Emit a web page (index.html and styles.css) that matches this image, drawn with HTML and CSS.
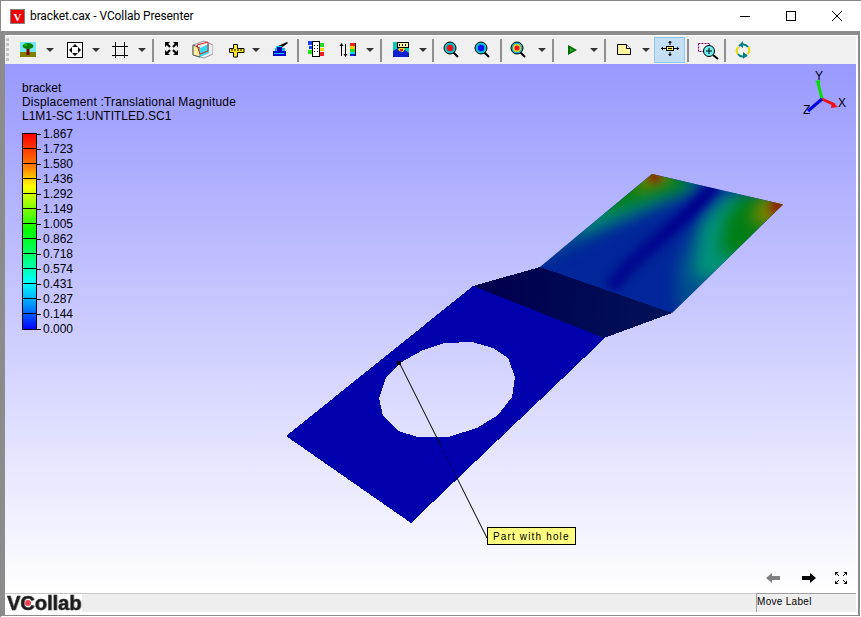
FILE: index.html
```html
<!DOCTYPE html>
<html lang="en">
<head>
<meta charset="utf-8">
<title>bracket.cax - VCollab Presenter</title>
<link rel="stylesheet" href="styles.css">
</head>
<body>
<div class="window">
  <header class="titlebar">
    <svg class="appicon" viewBox="0 0 15 15" width="15" height="15"><rect x=".5" y=".5" width="14" height="14" fill="#f00000" stroke="#808080"/><text x="7.5" y="11.5" class="appicon-v">V</text></svg>
    <span class="title">bracket.cax - VCollab Presenter</span>
    <div class="winbtns">
      <span class="winbtn"><svg viewBox="0 0 10 10" width="10" height="10"><path d="M0 5.5h10" stroke="#000" fill="none"/></svg></span>
      <span class="winbtn"><svg viewBox="0 0 10 10" width="10" height="10"><rect x=".5" y=".5" width="9" height="9" stroke="#000" fill="none"/></svg></span>
      <span class="winbtn"><svg viewBox="0 0 10 10" width="10" height="10"><path d="M0 0l10 10M10 0L0 10" stroke="#000" fill="none"/></svg></span>
    </div>
  </header>
  <div class="client">
    <div class="toolbar">
      <span class="grip"></span>
      <svg class="ico m5" viewBox="0 0 24 24"><rect x="6" y="4" width="16" height="10" fill="#6fe8f5"/><rect x="6" y="14" width="16" height="5" fill="#808000"/><rect x="12.500" y="10" width="3" height="7" fill="#800000"/><ellipse cx="14" cy="8" rx="5.500" ry="3" fill="#008000"/><rect x="10" y="6" width="3" height="2" fill="#00c000"/></svg>
      <span class="caret m6"></span>
      <svg class="ico m7" viewBox="0 0 24 24"><rect x="4.500" y="4.500" width="15" height="15" fill="#fff" stroke="#000"/><path d="M12 6l3 3H9zM12 18l3-3H9zM6 12l3-3v6zM18 12l-3-3v6z" fill="#000"/></svg>
      <span class="caret m3"></span>
      <svg class="ico m6" viewBox="0 0 24 24"><path d="M7.500 4v16M16.500 4v16M4 8.500h16M4 17.500h16" stroke="#000" fill="none"/></svg>
      <span class="caret m4"></span>
      <span class="sep m4"></span>
      <svg class="ico m5" viewBox="0 0 24 24"><path d="M8 6l3 3M17 6l-3 3M8 15l3-3M17 15l-3-3" stroke="#000" stroke-width="2" fill="none"/><path d="M6 4h5l-5 5zM19 4h-5l5 5zM6 17h5l-5-5zM19 17h-5l5-5z" fill="#000"/></svg>
      <svg class="ico m6" viewBox="0 0 24 24"><path d="M4 7l11-4 9 4v9l-9 4-11-3z" fill="#eee" stroke="#999"/><path d="M4 7l7 3v9l-7-2z" fill="#fff0a0" stroke="#555"/><path d="M11 10l9-4v9l-9 4z" fill="#30d8f0"/><path d="M8 7l11-3v9l-8 3z" fill="none" stroke="#e02020"/></svg>
      <svg class="ico m11" viewBox="0 0 24 24"><path d="M9.500 6.500h4v4h6.500v4h-6.500v4.500h-4v-4.500h-4v-4h4z" fill="#ffe820" stroke="#000"/><path d="M8 11v2M11 11v2M14 11v2M17 11v2" stroke="#000" fill="none"/></svg>
      <span class="caret m2"></span>
      <svg class="ico m7" viewBox="0 0 24 24"><path d="M9 8l9-4 1 1-8 6z" fill="#000"/><path d="M7 8h6v3H7z" fill="#10c8f0"/><path d="M6 10h10v3H6z" fill="#10b0e8"/><path d="M8 9h5v5H8z" fill="#0000a0"/><path d="M4 13h13v5H4z" fill="#0000d0"/><path d="M5 15h10v1H5z" fill="#10c8f0"/></svg>
      <span class="sep m4"></span>
      <svg class="ico m5" viewBox="0 0 24 24"><rect x="8.500" y="3.500" width="7" height="15" fill="#fff" stroke="#000"/><path d="M10 7h1v1h-1zM13 7h1v1h-1zM10 10h1v1h-1zM13 10h1v1h-1zM10 13h1v1h-1zM13 13h1v1h-1z" fill="#000"/><rect x="4" y="3" width="4" height="4" fill="#2040ff"/><rect x="5" y="8" width="3" height="3" fill="#0050ff"/><rect x="4" y="12" width="4" height="4" fill="#20e020"/><rect x="16" y="5" width="4" height="4" fill="#20e020"/><rect x="16" y="10" width="4" height="3" fill="#f0d000"/><rect x="16" y="14" width="4" height="4" fill="#f02020"/></svg>
      <svg class="ico m8" viewBox="0 0 24 24"><path d="M5.500 6v12M9.500 6v12" stroke="#000" fill="none"/><path d="M5.500 5l2 3h-4zM9.500 19l2-3h-4z" fill="#000"/><rect x="14" y="5" width="5" height="3" fill="#f02020"/><rect x="14" y="8" width="5" height="3" fill="#f0d000"/><rect x="14" y="11" width="5" height="3" fill="#20e020"/><rect x="14" y="14" width="5" height="2" fill="#10d0f0"/><rect x="14" y="16" width="5" height="2" fill="#1020d0"/><rect x="19" y="5" width="1" height="13" fill="#000"/></svg>
      <span class="caret m4"></span>
      <span class="sep m4"></span>
      <svg class="ico m7" viewBox="0 0 24 24"><rect x="4" y="4" width="16" height="15" fill="#10c8b0"/><path d="M4 13l5-3 4 3 3-1 4 3v4H4z" fill="#1020d0"/><path d="M9 11l4-2 3 2-2 3-4-1z" fill="#f0e000"/><path d="M11 11l3 0 0 2-3 0z" fill="#e02020"/><rect x="8.500" y="4.500" width="11" height="5" fill="#fff8a0" stroke="#000"/><path d="M10 6h1v2h-1zM13 6h1v2h-1zM16 6h1v2h-1z" fill="#000"/></svg>
      <span class="caret m4"></span>
      <span class="sep m3"></span>
      <svg class="ico m4" viewBox="0 0 24 24"><path d="M15 14l5 5" stroke="#000" stroke-width="2" fill="none"/><circle cx="12" cy="10" r="6" fill="#10c0d0" stroke="#000"/><circle cx="12" cy="10" r="3.200" fill="#f01010"/></svg>
      <svg class="ico m7" viewBox="0 0 24 24"><path d="M15 14l5 5" stroke="#000" stroke-width="2" fill="none"/><circle cx="12" cy="10" r="6" fill="#10c0d0" stroke="#000"/><circle cx="12" cy="10" r="3.200" fill="#0010f0"/></svg>
      <span class="sep m7"></span>
      <svg class="ico m3" viewBox="0 0 24 24"><path d="M15 14l5 5" stroke="#000" stroke-width="2" fill="none"/><circle cx="12" cy="10" r="6" fill="#10b0d0" stroke="#000"/><circle cx="12" cy="10" r="4" fill="#f0d020"/><circle cx="12" cy="10" r="2.500" fill="#f01010"/></svg>
      <span class="caret m7"></span>
      <span class="sep m4"></span>
      <svg class="ico m7" viewBox="0 0 24 24"><path d="M7 7l9 5-9 5z" fill="#006a00"/><path d="M9 10l4 2-4 2z" fill="#20b020"/></svg>
      <span class="caret m3"></span>
      <span class="sep m4"></span>
      <svg class="ico m6" viewBox="0 0 24 24"><path d="M5.500 6.500h9l4 4v6h-13z" fill="#fff6a0" stroke="#000"/><path d="M14.500 6.500v4h4" fill="#fff" stroke="#000"/></svg>
      <span class="caret m4"></span>
      <span class="active m2"><svg class="ico" viewBox="0 0 24 24"><path d="M3 10.500h18M12 3v4M12 14v4" stroke="#000" fill="none"/><path d="M3 10.500l2-2v4zM21 10.500l-2-2v4zM12 3l-2 2h4zM12 18l-2-2h4z" fill="#000"/><rect x="8.500" y="8.500" width="7" height="4" fill="#fff060" stroke="#000"/><path d="M10 10.500h4" stroke="#000" fill="none"/></svg></span>
      <span class="sep m2"></span>
      <svg class="ico m7" viewBox="0 0 24 24"><rect x="2.500" y="5.500" width="11" height="8" fill="none" stroke="#800080" stroke-dasharray="2 1"/><path d="M17 17l5 4" stroke="#000" stroke-width="2" fill="none"/><circle cx="13" cy="13" r="5.500" fill="#70eef0" stroke="#000"/><path d="M13 10v6M10 13h6" stroke="#000" fill="none"/></svg>
      <span class="sep m4"></span>
      <svg class="ico m5" viewBox="0 0 24 24"><path d="M8 8a6 6 0 0 1 9 1" stroke="#008080" stroke-width="2" fill="none"/><path d="M16 17a6 6 0 0 1-9-1" stroke="#008080" stroke-width="2" fill="none"/><path d="M17.500 9a6 6 0 0 1-1 7M6.500 16a6 6 0 0 1 1-7" stroke="#e8d800" stroke-width="2" fill="none"/><path d="M12 3v7l-4-3zM12 21v-7l4 3z" fill="#008080"/></svg>
    </div>
    <main class="viewport">
      <svg class="scene" viewBox="5 64 851 529" width="851" height="529">
        <defs>
          <clipPath id="panel"><polygon class="flat" points="652,174 783,204.500 672,313 540,267"/></clipPath>
          <filter id="soft" x="-40%" y="-40%" width="180%" height="180%" color-interpolation-filters="sRGB"><feGaussianBlur stdDeviation="22"/></filter>
          <filter id="softer" x="-40%" y="-40%" width="180%" height="180%" color-interpolation-filters="sRGB"><feGaussianBlur stdDeviation="13"/></filter>
          <linearGradient id="fold" gradientUnits="userSpaceOnUse" x1="500" y1="300" x2="660" y2="320"><stop offset="0" stop-color="#00004e"/><stop offset="1" stop-color="#001258"/></linearGradient>
        </defs>
        <path class="flat" fill-rule="evenodd" fill="#0000ac" d="M473 286L605 338 411 523 286 436ZM400 363L423 350 445 343 472 342 493 348 508 358 515 377 512 397 498 415 477 428 448 437 418 437 398 431 383 416 379 398 386 378Z"/>
        <polygon class="flat" points="541,266 672,312 660,317 541,272" fill="#00269a"/>
        <rect x="530" y="165" width="260" height="155" fill="#00269a" clip-path="url(#panel)"/>
        <g clip-path="url(#panel)">
          <g transform="translate(530 165) scale(.33333)">
            <g filter="url(#soft)">
              <polygon points="-20,310 530,55 365,-60 160,20" fill="#00508e"/>
              <polygon points="130,220 510,70 365,-40 200,70" fill="#008a70"/>
              <polygon points="215,145 490,60 365,-30 240,40" fill="#007e14"/>
              <polygon points="305,85 430,45 365,-40" fill="#808400"/>
              <polygon points="560,80 440,290 440,450 830,300 830,60" fill="#00508e"/>
              <polygon points="600,85 510,170 490,340 830,340 830,60" fill="#00927a"/>
              <polygon points="640,90 585,160 570,270 830,270 830,70" fill="#007e14"/>
              <polygon points="690,100 660,175 830,190 830,80" fill="#808400"/>
            </g>
            <g filter="url(#softer)">
              <polygon points="340,15 400,25 375,60" fill="#901400"/>
              <polygon points="725,100 790,110 720,155" fill="#901400"/>
              <path d="M555 62L470 150 400 210" stroke="#00008c" stroke-width="38" fill="none"/>
              <path d="M400 210L300 300 240 370" stroke="#00008c" stroke-opacity=".8" stroke-width="44" fill="none"/>
            </g>
          </g>
        </g>
        <polygon class="flat" points="540,267 672,313 604,338 473,286" fill="url(#fold)"/>
        <path class="leader" d="M399.500 363L440 444"/>
        <path class="leader leader-dash" d="M440 444L456.500 477"/>
        <path class="leader" d="M456.500 477L487 538"/>
        <rect x="397" y="361" width="4" height="4" fill="#000"/>
        <path d="M822 99L818 83" stroke="#00e000" stroke-width="3" fill="none"/>
        <path d="M815 81l5-1 0 6z" fill="#00e000"/>
        <path d="M822 99L835 105" stroke="#f01010" stroke-width="3" fill="none"/>
        <path d="M838 107l-6-5-1 6z" fill="#f01010"/>
        <path d="M822 99L808 111" stroke="#0000e0" stroke-width="3" fill="none"/>
        <text x="815" y="80" class="axis">Y</text>
        <text x="838" y="107" class="axis">X</text>
        <text x="803" y="114" class="axis">Z</text>
      </svg>
      <div class="legend">
        <div class="legend-line">bracket</div>
        <div class="legend-line legend-wide">Displacement :Translational Magnitude</div>
        <div class="legend-line">L1M1-SC 1:UNTITLED.SC1</div>
        <div class="scale">
          <div class="bar">
            <i></i><i></i><i></i><i></i><i></i><i></i><i></i><i></i><i></i><i></i><i></i><i></i><i></i>
          </div>
          <div class="labels">
            <span>1.867</span><span>1.723</span><span>1.580</span><span>1.436</span><span>1.292</span><span>1.149</span><span>1.005</span><span>0.862</span><span>0.718</span><span>0.574</span><span>0.431</span><span>0.287</span><span>0.144</span><span>0.000</span>
          </div>
        </div>
      </div>
      <div class="note">Part with hole</div>
      <div class="nav">
        <svg class="nav-back" viewBox="0 0 14 12" width="14" height="12"><path d="M0 6l6-5v3h8v4H6v3z" fill="#808080"/></svg>
        <svg viewBox="0 0 14 12" width="14" height="12"><path d="M14 6L8 1v3H0v4h8v3z" fill="#000"/></svg>
        <svg viewBox="0 0 12 12" width="12" height="12"><path d="M0 0h3.500L0 3.500zM12 0H8.500L12 3.500zM0 12h3.500L0 8.500zM12 12H8.500L12 8.500z" fill="#000"/><path d="M2 2l2 2M10 2L8 4M2 10l2-2M10 10L8 8" stroke="#000" fill="none"/></svg>
      </div>
    </main>
    <footer class="statusbar">
      <div class="logo">VCollab<span class="logo-dot"></span></div>
      <div class="status-cell">Move Label</div>
    </footer>
  </div>
</div>
</body>
</html>
```

FILE: styles.css
```css
* { box-sizing: border-box; }
html, body { margin: 0; padding: 0; }
body { width: 861px; height: 617px; overflow: hidden; background: #fff; font-family: "Liberation Sans", Arial, sans-serif; }

.window { width: 861px; height: 617px; display: flex; flex-direction: column; background: #fff; border-top: 1px solid #8a8a8a; border-left: 1px solid #8a8a8a; }

.titlebar { height: 30px; flex: none; display: flex; align-items: center; padding-left: 9px; background: #fff; }
.appicon { flex: none; }
.appicon-v { font: bold 11px "Liberation Serif", serif; fill: #fff; text-anchor: middle; }
.title { margin-left: 5px; font: 12px Roboto, sans-serif; letter-spacing: -.1px; color: #000; }
.winbtns { margin-left: auto; display: flex; margin-right: 1px; }
.winbtn { width: 46px; height: 30px; display: flex; align-items: center; justify-content: center; }

.client { flex: 1; min-height: 0; display: flex; flex-direction: column; margin: 0 1px 1px 0; border-top: 4px solid #8c8c8c; border-left: 4px solid #8c8c8c; border-right: 2px solid #8c8c8c; border-bottom: 1px solid #8c8c8c; padding: 1px 2px 3px 0; }

.toolbar { height: 28px; flex: none; display: flex; align-items: center; background: #f0f0f0; padding-left: 1px; }
.grip { width: 3px; height: 25px; flex: none; background: repeating-linear-gradient(to bottom, #c4c4c4 0 3px, transparent 3px 5px); }
.ico { width: 24px; height: 24px; flex: none; display: block; }
.caret { width: 12px; height: 24px; flex: none; position: relative; }
.caret::after { content: ""; position: absolute; left: 2px; top: 10px; border-left: 4px solid transparent; border-right: 4px solid transparent; border-top: 4px solid #333; }
.sep { width: 2px; height: 23px; flex: none; background: #8f8f8f; }
.active { width: 31px; height: 26px; flex: none; display: flex; align-items: center; justify-content: center; background: #c4def4; border: 1px solid #90c8f6; }

.m2 { margin-left: 2px; }
.m3 { margin-left: 3px; }
.m4 { margin-left: 4px; }
.m5 { margin-left: 5px; }
.m6 { margin-left: 6px; }
.m7 { margin-left: 7px; }
.m8 { margin-left: 8px; }
.m11 { margin-left: 11px; }

.viewport { height: 529px; flex: none; position: relative; overflow: hidden; background: linear-gradient(to bottom, #9999ff, #ffffff); }
.scene { position: absolute; left: 0; top: 0; display: block; }
.flat { shape-rendering: crispEdges; }
.leader { stroke: #000; stroke-width: 1; fill: none; }
.leader-dash { stroke-dasharray: 3 4; stroke: #000040; }
.axis { font: 12px "Liberation Sans", sans-serif; fill: #000; }

.legend { position: absolute; left: 17px; top: 17px; font-size: 12px; line-height: 14px; color: #000; }
.legend-line { white-space: nowrap; }
.legend-wide { letter-spacing: .19px; }
.scale { display: flex; align-items: flex-start; margin-top: 10px; }
.bar { width: 15px; height: 197px; flex: none; border: 1px solid #000; display: flex; flex-direction: column; background: linear-gradient(to bottom, #ff0000 0, #ff8000 17%, #ffff00 27%, #80ff00 38%, #00ff00 50%, #00ff90 66%, #00ffff 76%, #0090ff 88%, #0000ff 100%); }
.bar i { display: block; height: 15px; flex: none; border-bottom: 1px solid #000; }
.bar i:last-child { border-bottom: 0; }
.labels { display: flex; flex-direction: column; margin-top: -6px; }
.labels span { height: 15px; line-height: 15px; display: flex; align-items: center; }
.labels span::before { content: ""; width: 4px; height: 1px; background: #000; margin-right: 2px; }

.note { position: absolute; left: 482px; top: 463px; width: 89px; height: 18px; border: 1px solid #000; background: #ffff80; font-size: 10px; letter-spacing: 1.15px; line-height: 17px; padding-left: 5px; white-space: nowrap; color: #000; }

.nav { position: absolute; left: 761px; top: 508px; display: flex; align-items: center; gap: 19px; }
.nav-back { margin-right: 3px; }

.statusbar { height: 19px; flex: none; display: flex; background: #eeeeee; border-top: 1px solid #c8c8c8; position: relative; }
.logo { width: 77px; height: 18px; background: #fff; font-weight: bold; font-size: 20px; line-height: 18px; color: #1c1c1c; -webkit-text-stroke: .4px #333; text-shadow: 1px 0 1px #999; padding-left: 2px; position: relative; filter: blur(.35px); white-space: nowrap; }
.logo-dot { position: absolute; left: 20px; top: 6px; width: 6px; height: 6px; border-radius: 50%; background: #f04050; }
.status-cell { margin-left: auto; width: 100px; height: 19px; border-left: 1px solid #a0a0a0; border-top: 1px solid #a0a0a0; margin-top: -1px; font-size: 10px; letter-spacing: .3px; line-height: 16px; color: #000; white-space: nowrap; }
```
